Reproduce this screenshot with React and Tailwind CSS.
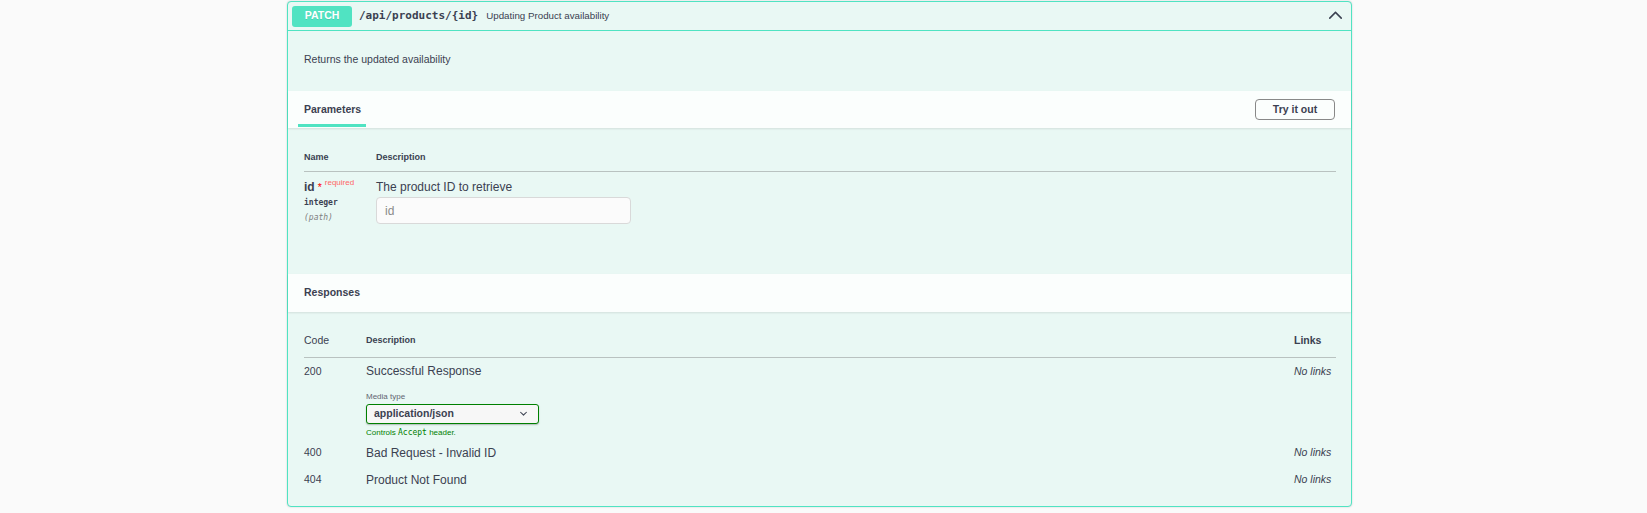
import React from 'react';

const sans = "font-['Liberation_Sans',Arial,sans-serif]";
const mono = "font-['DejaVu_Sans_Mono',monospace]";

function ArrowUp() {
  return (
    <svg viewBox="0 0 20 20" className="w-[17px] h-[17px] mr-[3px] relative -top-[2px]" fill="#3b4151">
      <path d="M17.418 14.908c-.363.363-.954.363-1.318 0L10 8.808l-6.1 6.1c-.363.363-.954.363-1.318 0-.363-.363-.363-.954 0-1.318l6.759-6.759c.364-.363.954-.363 1.318 0l6.759 6.759c.363.364.363.954 0 1.318z" />
    </svg>
  );
}

function ChevronDown() {
  return (
    <svg viewBox="0 0 20 20" className="w-[15px] h-[15px]" fill="#3b4151">
      <path d="M13.418 7.859a.695.695 0 01.978 0 .68.68 0 010 .969l-3.908 3.83a.697.697 0 01-.979 0l-3.908-3.83a.68.68 0 010-.969.695.695 0 01.978 0L10 11l3.418-3.141z" />
    </svg>
  );
}

const responses = [
  { code: '200', text: 'Successful Response', media: true },
  { code: '400', text: 'Bad Request - Invalid ID' },
  { code: '404', text: 'Product Not Found' },
];

export default function App() {
  return (
    <div className={`w-full h-[513px] bg-[#fafafa] pt-px text-[#3b4151] ${sans}`}>
      <div className="ml-[287px] w-[1065px] border border-[#50e3c2] rounded-[4px] bg-[#e9f8f4] shadow-[0_0_2px_rgba(0,0,0,0.19)]">
        {/* summary */}
        <div className="h-[29px] flex items-center px-[4px] border-b border-[#50e3c2]">
          <div className="w-[60px] h-[21px] rounded-[3px] bg-[#50e3c2] text-white text-[10.5px] font-bold flex items-center justify-center [text-shadow:0_1px_0_rgba(0,0,0,0.1)]">
            PATCH
          </div>
          <span className={`ml-[7px] text-[11px] font-bold ${mono}`}>/api/products/{'{id}'}</span>
          <span className="ml-[8px] text-[9.75px]">Updating Product availability</span>
          <div className="flex-1" />
          <ArrowUp />
        </div>

        {/* description */}
        <div className="h-[60px] pl-[16px] pt-[22px] text-[10.5px] leading-[12px]">
          Returns the updated availability
        </div>

        {/* parameters tab header */}
        <div className="h-[37px] bg-[#fbfefd] shadow-[0_1px_2px_rgba(0,0,0,0.1)] flex items-center pl-[10px] pr-[16px] relative">
          <div className="relative h-full px-[6px] flex items-center pt-[1px]">
            <span className="text-[10.5px] font-bold">Parameters</span>
            <div className="absolute left-0 right-[1px] bottom-[1px] h-[3px] bg-[#50e3c2]" />
          </div>
          <div className="flex-1" />
          <button className="w-[80px] h-[21px] border-[1.5px] border-[#888] rounded-[4px] text-[10.5px] font-bold bg-transparent">
            Try it out
          </button>
        </div>

        {/* parameters body */}
        <div className="h-[146px] pl-[16px] pr-[15px] pt-[24px]">
          <div className="flex items-center h-[12px] text-[9px] font-bold">
            <div className="w-[72px]">Name</div>
            <div>Description</div>
          </div>
          <div className="mt-[7px] border-b border-[#b9c2c0]" />
          <div className="flex pt-[8px]">
            <div className="w-[72px]">
              <div className="h-[14px] flex items-center whitespace-nowrap">
                <span className="text-[12px] font-bold leading-[14px]">id</span>
                <span className="text-[10.5px] text-[#ff0000] ml-[3px] relative top-[1px]">*</span>
                <span className="text-[8px] text-[#ff6666] ml-[3px] relative -top-[4px]">required</span>
              </div>
              <div className={`mt-[4px] h-[10px] leading-[10px] text-[8px] font-bold ${mono}`}>integer</div>
              <div className={`mt-[5px] h-[10px] leading-[10px] text-[8px] italic text-[#808080] ${mono}`}>(path)</div>
            </div>
            <div className="flex-1">
              <div className="text-[12px] leading-[14px]">The product ID to retrieve</div>
              <div className="mt-[3px] w-[255px] h-[27px] border border-[#d9d9d9] rounded-[4px] bg-[#fbfbfb] flex items-center pl-[8px] text-[12px] text-[#8a8a8a]">
                id
              </div>
            </div>
          </div>
        </div>

        {/* responses header */}
        <div className="h-[38px] bg-[#fbfefd] shadow-[0_1px_2px_rgba(0,0,0,0.1)] flex items-center pl-[16px]">
          <span className="text-[10.5px] font-bold">Responses</span>
        </div>

        {/* responses body */}
        <div className="pl-[16px] pr-[15px] pt-[23px] pb-[13px]">
          <div className="flex items-center h-[12px]">
            <div className="w-[62px] text-[10.5px]">Code</div>
            <div className="flex-1 text-[9px] font-bold">Description</div>
            <div className="w-[42px] text-[10.5px] font-bold">Links</div>
          </div>
          <div className="mt-[10px] border-b border-[#b9c2c0]" />
          {responses.map((r) =>
            r.media ? (
              <div key={r.code} className="flex h-[81px] pt-[7px]">
                <div className="w-[62px] text-[10.5px] leading-[12px]">{r.code}</div>
                <div className="flex-1">
                  <div className="text-[12px] leading-[12px]">{r.text}</div>
                  <div className="mt-[14.5px] text-[8px] leading-[9px] text-[#5f6571]">Media type</div>
                  <div className="mt-[3px] w-[173px] h-[20px] border-[1.5px] border-[#008000] rounded-[3px] bg-[#f7f7f7] shadow-[0_1px_1.5px_rgba(0,0,0,0.25)] flex items-center pl-[7px] pr-[7px]">
                    <span className="flex-1 text-[10.5px] font-bold">application/json</span>
                    <ChevronDown />
                  </div>
                  <div className="mt-[4px] text-[8px] leading-[9px] text-[#008000]">
                    Controls <span className={mono}>Accept</span> header.
                  </div>
                </div>
                <div className="w-[42px] text-[10.5px] leading-[12px] italic whitespace-nowrap">No links</div>
              </div>
            ) : (
              <div key={r.code} className="flex items-center h-[27px]">
                <div className="w-[62px] text-[10.5px]">{r.code}</div>
                <div className="flex-1 text-[12px]">{r.text}</div>
                <div className="w-[42px] text-[10.5px] italic whitespace-nowrap">No links</div>
              </div>
            )
          )}
        </div>
      </div>
    </div>
  );
}
